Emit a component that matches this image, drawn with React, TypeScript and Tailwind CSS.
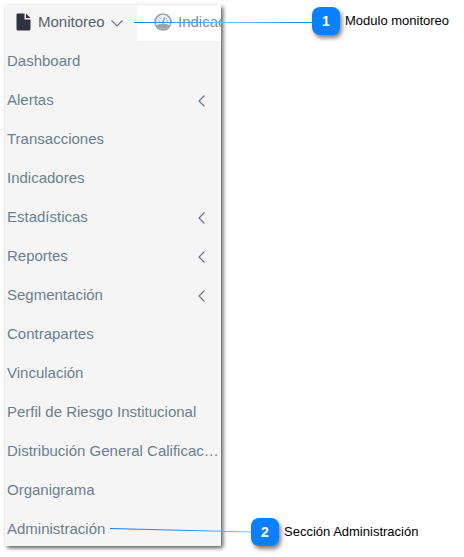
const items = [
  { label: "Dashboard" },
  { label: "Alertas", sub: true },
  { label: "Transacciones" },
  { label: "Indicadores" },
  { label: "Estadísticas", sub: true },
  { label: "Reportes", sub: true },
  { label: "Segmentación", sub: true },
  { label: "Contrapartes" },
  { label: "Vinculación" },
  { label: "Perfil de Riesgo Institucional" },
  { label: "Distribución General Calificaciones" },
  { label: "Organigrama" },
  { label: "Administración" },
];

const Callout = ({ n, text, className }: { n: number; text: string; className: string }) => (
  <div className={`absolute flex items-center gap-[5px] ${className}`}>
    <div className="flex h-[28px] w-[28px] items-center justify-center rounded-[8px] bg-[#0a80ff] text-[14px] font-bold text-white shadow-[2px_3px_4px_rgba(0,0,0,0.5)]">
      {n}
    </div>
    <span className="text-[13px] whitespace-nowrap text-black">{text}</span>
  </div>
);

const App = () => {
  return (
    <div className="relative h-[557px] w-[464px] overflow-hidden bg-white font-['Liberation_Sans',sans-serif]">
      <div className="absolute top-[5px] left-[5px] h-[541px] w-[216px] overflow-hidden bg-[#f5f5f5] shadow-[2px_2px_4px_rgba(0,0,0,0.65)]">
        <div className="flex h-[36px] overflow-hidden bg-white">
          <div className="flex h-full w-[132px] shrink-0 items-center bg-[#f5f5f5] pb-[2px] pl-[11px] text-[15px] text-[#56616f]">
            <svg width="15" height="18" viewBox="0 0 15 18" className="mr-[7px] shrink-0">
              <path d="M1.5 0.5H8.5V6.5H14.5V16a1.5 1.5 0 0 1-1.5 1.5H2A1.5 1.5 0 0 1 0.5 16V1.5a1 1 0 0 1 1-1z" fill="#2f3340" />
              <path d="M10 0.5L14.5 5H10z" fill="#2f3340" />
            </svg>
            Monitoreo
            <svg width="12" height="7" viewBox="0 0 12 7" className="mt-[3px] ml-[6px] shrink-0">
              <path d="M0.5 0.5L6 6l5.5-5.5" fill="none" stroke="#66717e" strokeWidth="1.1" />
            </svg>
          </div>
          <div className="flex items-center pb-[2px] pl-[17px] text-[15px] whitespace-nowrap text-[#7d8c99]">
            <svg width="18" height="18" viewBox="0 0 18 18" className="mr-[6px] shrink-0">
              <circle cx="9" cy="9" r="8" fill="#eef0f1" stroke="#9aa3ab" strokeWidth="1.6" />
              <path d="M2.5 12.5a8 8 0 0 0 13 0l-3-1.5H5.5z" fill="#9aa3ab" />
              <path d="M8.5 11L10.5 4.5" stroke="#9aa3ab" strokeWidth="1.6" />
              <path d="M4 8h1.5M5.5 4.5l1 1M13 5l-1 1M14 8h-1.5" stroke="#9aa3ab" strokeWidth="1" />
            </svg>
            Indicadores
          </div>
        </div>
        <ul className="flex flex-col pt-[1px]">
          {items.map((item) => (
            <li
              key={item.label}
              className="flex h-[39px] items-center justify-between pl-[2px] text-[15px] text-[#6a7f8f]"
            >
              <span className="truncate">{item.label}</span>
              {item.sub && (
                <svg width="7" height="12" viewBox="0 0 7 12" className="mr-[16px] shrink-0">
                  <path d="M6.5 0.5L1 6l5.5 5.5" fill="none" stroke="#66717e" strokeWidth="1.1" />
                </svg>
              )}
            </li>
          ))}
        </ul>
      </div>

      {/* leader lines */}
      <svg width="464" height="557" className="absolute top-0 left-0">
        <defs>
          <linearGradient id="lineA" gradientUnits="userSpaceOnUse" x1="134" x2="312" y1="0" y2="0">
            <stop offset="0" stopColor="#0a80ff" />
            <stop offset="0.55" stopColor="#7cbcff" />
            <stop offset="1" stopColor="#0a80ff" />
          </linearGradient>
          <linearGradient id="lineB" gradientUnits="userSpaceOnUse" x1="110" x2="251" y1="0" y2="0">
            <stop offset="0" stopColor="#0a80ff" />
            <stop offset="0.55" stopColor="#2b90ff" />
            <stop offset="1" stopColor="#8cc4ff" />
          </linearGradient>
        </defs>
        <path d="M134 22.5H312" stroke="url(#lineA)" strokeWidth="1" />
        <path d="M110 528.5L251 532" stroke="url(#lineB)" strokeWidth="1" />
      </svg>

      <Callout n={1} text="Modulo monitoreo" className="top-[7px] left-[312px]" />
      <Callout n={2} text="Sección Administración" className="top-[518px] left-[251px]" />
    </div>
  );
};

export default App;
